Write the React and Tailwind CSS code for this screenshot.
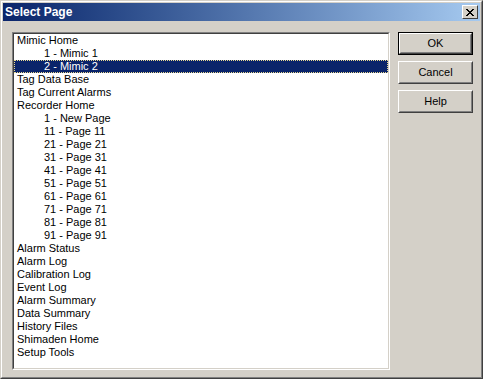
const ITEMS = [
  { label: "Mimic Home", indent: false },
  { label: "1 - Mimic 1", indent: true },
  { label: "2 - Mimic 2", indent: true, selected: true },
  { label: "Tag Data Base", indent: false },
  { label: "Tag Current Alarms", indent: false },
  { label: "Recorder Home", indent: false },
  { label: "1 - New Page", indent: true },
  { label: "11 - Page 11", indent: true },
  { label: "21 - Page 21", indent: true },
  { label: "31 - Page 31", indent: true },
  { label: "41 - Page 41", indent: true },
  { label: "51 - Page 51", indent: true },
  { label: "61 - Page 61", indent: true },
  { label: "71 - Page 71", indent: true },
  { label: "81 - Page 81", indent: true },
  { label: "91 - Page 91", indent: true },
  { label: "Alarm Status", indent: false },
  { label: "Alarm Log", indent: false },
  { label: "Calibration Log", indent: false },
  { label: "Event Log", indent: false },
  { label: "Alarm Summary", indent: false },
  { label: "Data Summary", indent: false },
  { label: "History Files", indent: false },
  { label: "Shimaden Home", indent: false },
  { label: "Setup Tools", indent: false },
];

const Button = ({ children, isDefault }) => (
  <div className={`w-[75px] h-[23px] ${isDefault ? "border border-black" : ""}`}>
    <div className="w-full h-full border border-t-white border-l-white border-r-[#404040] border-b-[#404040]">
      <div className="w-full h-full border border-t-[#d4d0c8] border-l-[#d4d0c8] border-r-[#808080] border-b-[#808080] flex items-center justify-center text-[11px] text-black">
        {children}
      </div>
    </div>
  </div>
);

export default function App() {
  return (
    <div
      className="w-[483px] h-[379px] bg-[#d4d0c8] border border-t-[#d4d0c8] border-l-[#d4d0c8] border-r-[#404040] border-b-[#404040]"
      style={{ fontFamily: '"Liberation Sans", Arial, sans-serif' }}
    >
      <div className="w-full h-full border border-t-white border-l-white border-r-[#808080] border-b-[#808080] p-px flex flex-col">
        {/* title bar */}
        <div className="h-[18px] flex items-center justify-between pl-[2px] pr-[2px] bg-gradient-to-r from-[#0a246a] to-[#a6caf0]">
          <span className="text-white font-bold text-[12px] leading-none">Select Page</span>
          <div className="w-[16px] h-[14px] bg-[#d4d0c8] border border-t-white border-l-white border-r-[#404040] border-b-[#404040] flex items-center justify-center">
            <svg width="8" height="7" viewBox="0 0 8 7">
              <path d="M0 0h2v1h1v1h2v-1h1v-1h2v1h-1v1h-1v1h-1v1h1v1h1v1h1v1h-2v-1h-1v-1h-2v1h-1v1h-2v-1h1v-1h1v-1h1v-1h-1v-1h-1v-1h-1z" fill="black" />
            </svg>
          </div>
        </div>

        {/* body */}
        <div className="flex pl-[9px] pt-[11px]">
          <div className="w-[378px] h-[338px] border border-t-[#808080] border-l-[#808080] border-r-white border-b-white">
            <div className="w-full h-full border border-t-[#404040] border-l-[#404040] border-r-[#d4d0c8] border-b-[#d4d0c8] bg-white flex flex-col">
              {ITEMS.map((item) => (
                <div
                  key={item.label}
                  className={`h-[13px] shrink-0 text-[11px] leading-[13px] whitespace-nowrap ${
                    item.indent ? "pl-[30px]" : "pl-[3px]"
                  } ${
                    item.selected
                      ? "bg-[#0a246a] text-white outline outline-1 outline-dotted outline-[#e8d890] -outline-offset-1"
                      : "text-black"
                  }`}
                >
                  {item.label}
                </div>
              ))}
            </div>
          </div>

          <div className="flex flex-col gap-[6px] ml-[8px]">
            <Button isDefault>OK</Button>
            <Button>Cancel</Button>
            <Button>Help</Button>
          </div>
        </div>
      </div>
    </div>
  );
}
